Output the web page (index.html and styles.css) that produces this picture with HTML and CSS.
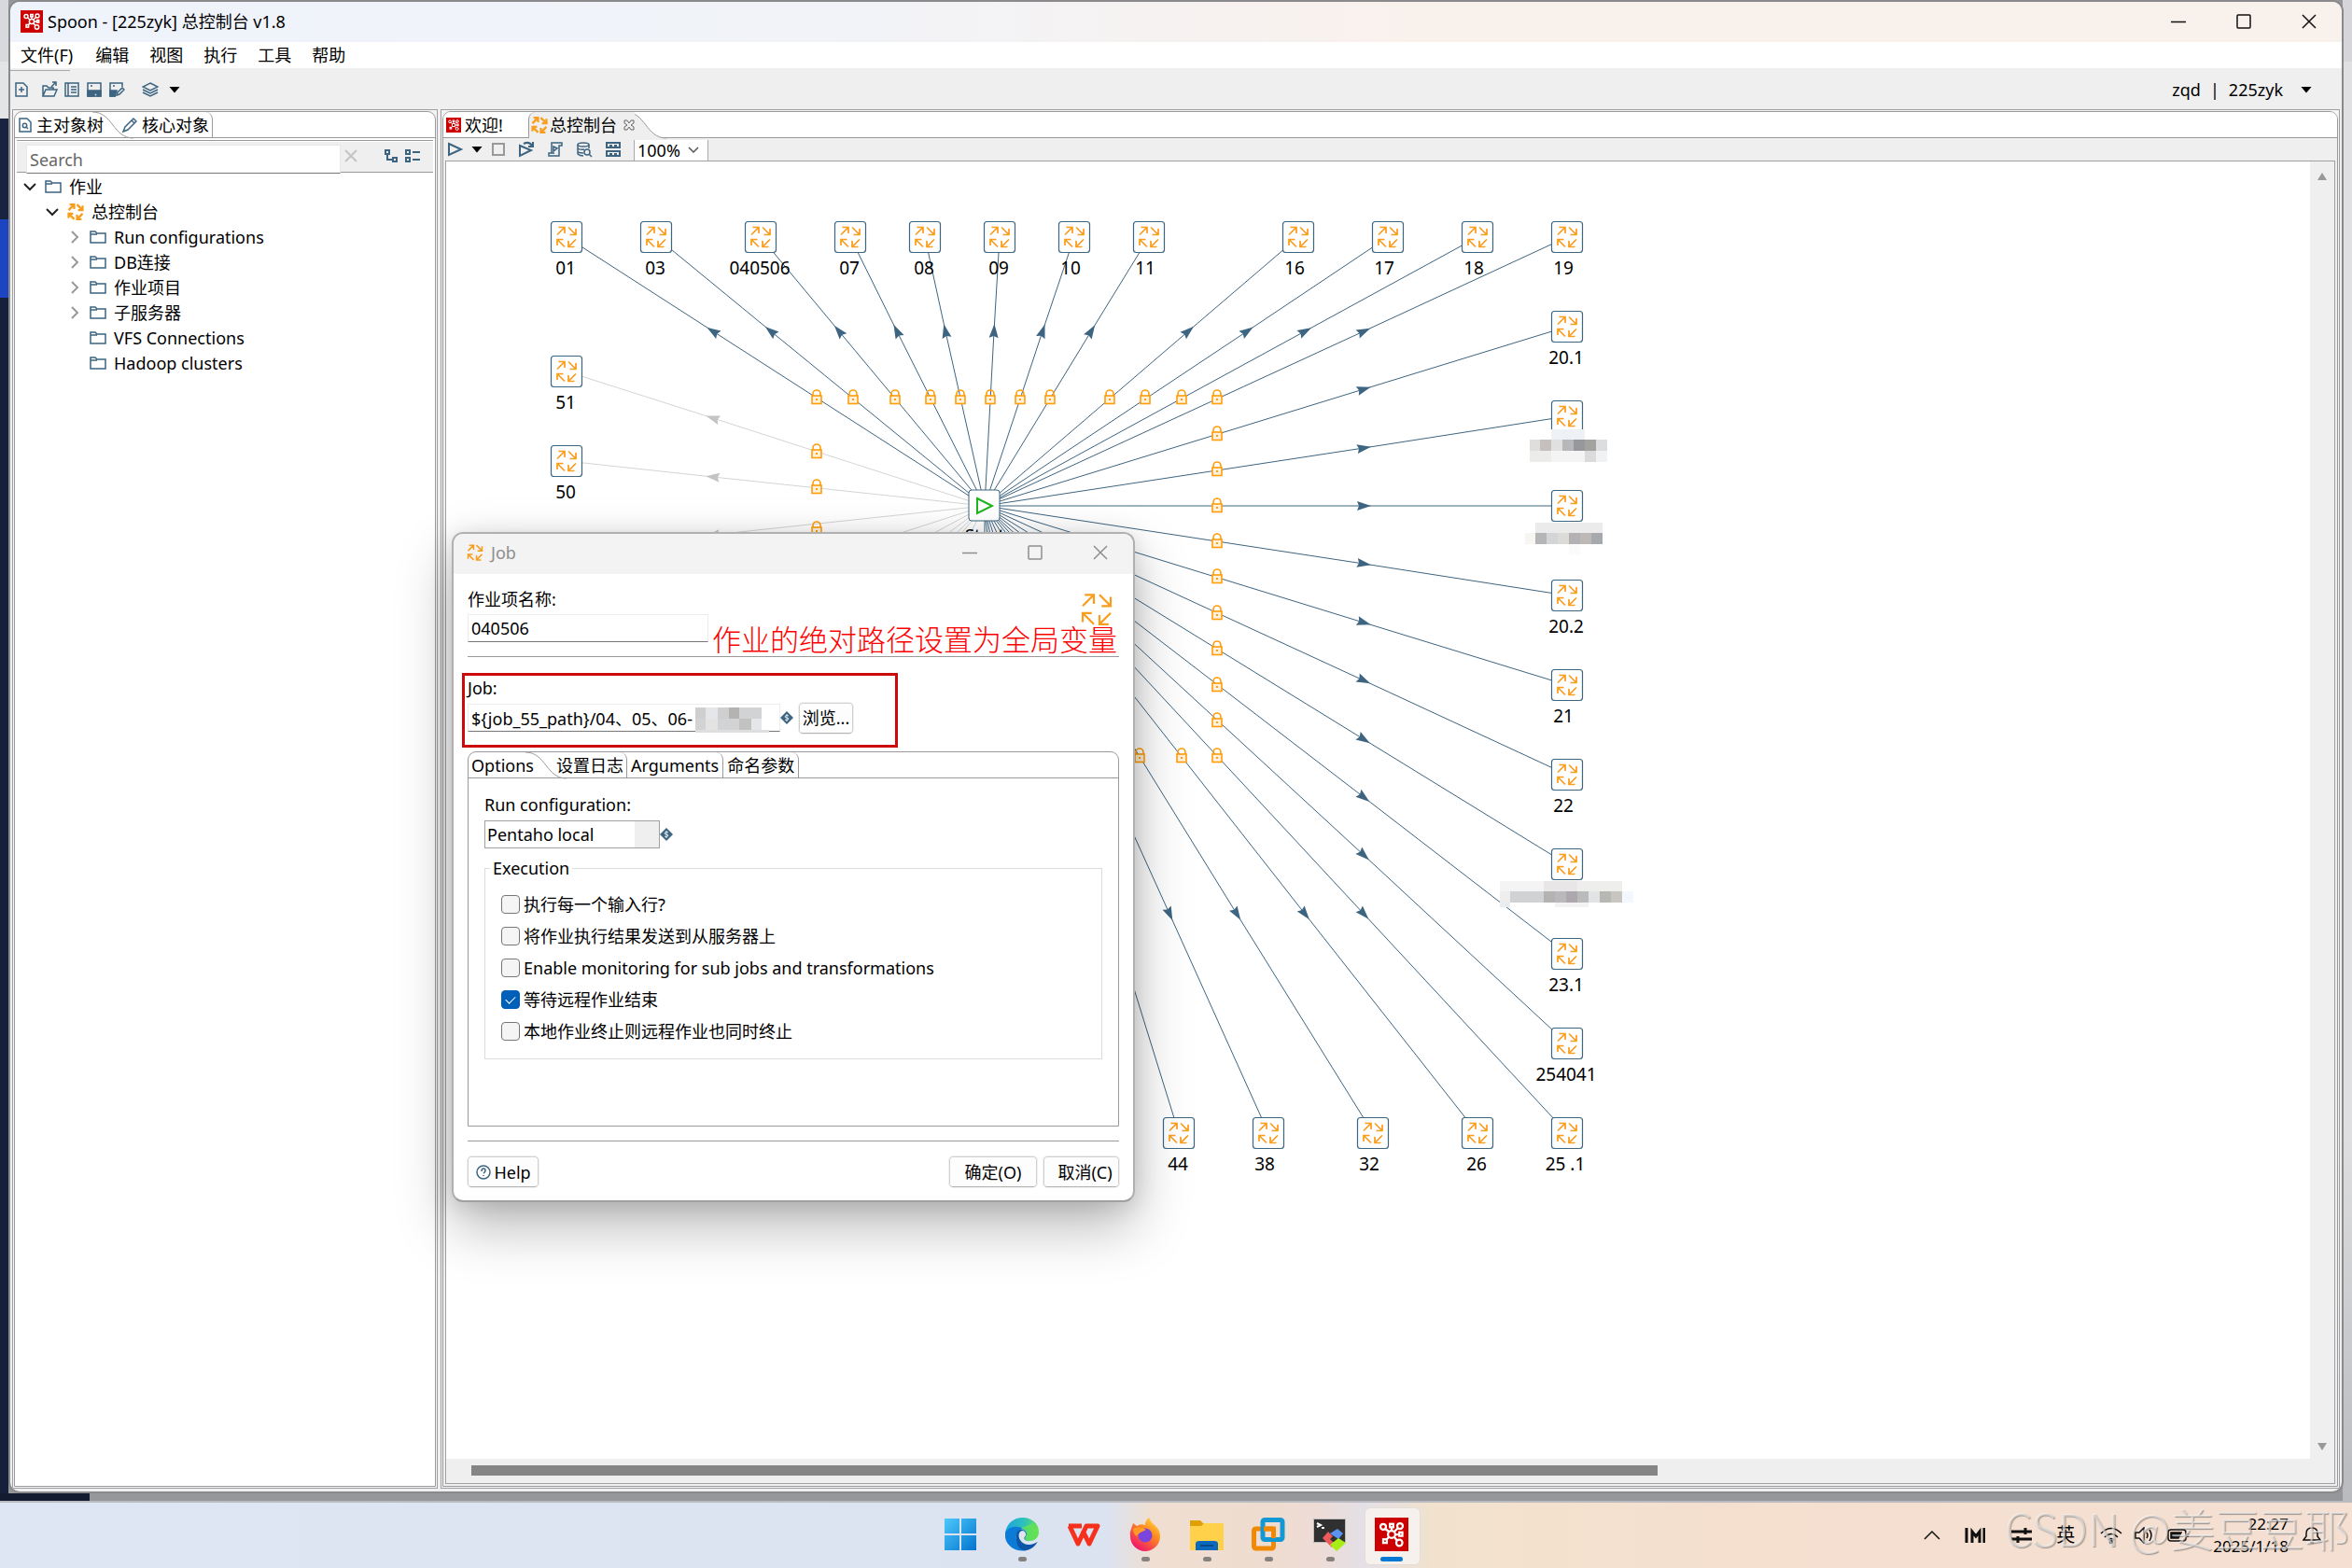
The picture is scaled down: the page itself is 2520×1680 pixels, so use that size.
FILE: index.html
```html
<!DOCTYPE html>
<html lang="zh-CN">
<head>
<meta charset="utf-8">
<title>Spoon - [225zyk] 总控制台 v1.8</title>
<link rel="stylesheet" href="styles.css">
</head>
<body>
<svg class="defs" width="0" height="0" aria-hidden="true">
  <defs>
    <symbol id="job" viewBox="-12 -12 24 24">
      <path d="M-10-2.500L-2-10.500M-8.500-10.500H-2V-4M2-10.500L10-2.500M10-9V-2.500H3.500M-2 10.500L-10 2.500M-10 9V2.500H-3.500M10 2.500L2 10.500M2 4V10.500H8.500"/>
    </symbol>
    <symbol id="folder" viewBox="0 0 18 14"><path d="M1 13V1H6L8 3H17V13ZM1 4H8" fill="none" stroke="#3d6480" stroke-width="1.500"/></symbol>
    <symbol id="logo" viewBox="0 0 24 24">
      <rect width="24" height="24" fill="#c00"/>
      <g fill="none" stroke="#fff" stroke-width="1.500"><circle cx="12" cy="12" r="2.600"/><circle cx="6" cy="6.500" r="2"/><circle cx="18" cy="6" r="2"/><circle cx="17.500" cy="18" r="2.200"/><rect x="6" y="15.500" width="2.600" height="2.600"/><rect x="10.800" y="4.500" width="2.400" height="2.400"/><rect x="17.500" y="10.500" width="2.200" height="2.600"/><path d="M7.500 8L10 10M16.500 7.500L14 10M14 14L16 16.500M10 14L8.500 15.500M12 7V9.500M14.500 12H17.500"/></g>
    </symbol>
    <symbol id="dollar" viewBox="0 0 14 14"><path d="M7 0L14 7L7 14L0 7Z" fill="#3d6480"/><path d="M9 5Q7 3.500 5.500 5T7 7T8.500 9T5 9M7 3V11" fill="none" stroke="#fff" stroke-width=".8"/></symbol>
    <symbol id="lock" viewBox="-7 -9 14 18"><rect x="-5" y="-2" width="10" height="8.500" fill="#fff1dc" stroke="#ff9d0a" stroke-width="1.600"/><path d="M-4-2V-4A4 4 0 0 1 4-4V-2" fill="none" stroke="#ff9d0a" stroke-width="1.600"/><rect x="-1" y="1" width="2" height="2" fill="#ff9d0a"/></symbol>
    <symbol id="node" viewBox="-18 -18 36 36"><rect x="-16.500" y="-16.500" width="33" height="33" rx="3" fill="#fff" stroke="#3d6480" stroke-width="1.200"/><use href="#job" x="-12" y="-12" width="24" height="24"/></symbol>
    <marker id="arrow" viewBox="-8 -8 16 16" markerWidth="16" markerHeight="16" markerUnits="userSpaceOnUse" orient="auto"><path d="M8 0L-7-5L-5 0L-7 5Z" fill="#3d6480"/></marker>
    <marker id="arrow-off" viewBox="-8 -8 16 16" markerWidth="16" markerHeight="16" markerUnits="userSpaceOnUse" orient="auto"><path d="M8 0L-7-5L-5 0L-7 5Z" fill="#c4c4c4"/></marker>
  </defs>
</svg>

<div class="desktop">
<main class="window">
  <header class="titlebar">
    <svg class="i24" ><use href="#logo"/></svg>
    <h1>Spoon - [225zyk] 总控制台 v1.8</h1>
    <div class="controls">
      <button aria-label="最小化"><svg width="16" height="16"><path d="M0 8.500H16"/></svg></button>
      <button aria-label="最大化"><svg width="16" height="16"><rect x="1" y="1" width="14" height="14" rx="1"/></svg></button>
      <button aria-label="关闭"><svg width="16" height="16"><path d="M1 1L15 15M15 1L1 15"/></svg></button>
    </div>
  </header>
  <nav class="menubar">
    <button>文件(F)</button><button>编辑</button><button>视图</button><button>执行</button><button>工具</button><button>帮助</button>
  </nav>
  <div class="toolbar">
    <button class="first" aria-label="新建"><svg width="16" height="18"><path d="M2 2H10L14 6V16H2ZM8 6V12M5 9H11"/></svg></button>
    <button aria-label="打开"><svg width="18" height="18"><path d="M2 16V5H6L8 7H13V9M2 16L5 9H17L14 16ZM11 6L16 1M12 1H16V5"/></svg></button>
    <button aria-label="浏览"><svg width="18" height="18"><path d="M2 2H16V16H2ZM5 2V16M8 6H14M8 9H14M8 12H14"/></svg></button>
    <button aria-label="保存"><svg width="18" height="18"><path d="M2 2H16V16H2ZM5 5H7"/><path d="M2 10H16V16H12V13H9V16H2Z" fill="#3d6480"/></svg></button>
    <button aria-label="另存为"><svg width="18" height="18"><path d="M8 16H2V2H15V6M5 5H7M9 15L10 12L15 7L17 9L12 14Z"/><path d="M2 10H9L7 16H2Z" fill="#3d6480"/></svg></button>
    <button class="layers" aria-label="透视图"><svg width="18" height="18"><path d="M9 2L17 6L9 10L1 6ZM1 9L9 13L17 9M1 12L9 16L17 12"/></svg></button>
    <i class="caret"></i>
    <div class="user"><span>zqd</span><span>|</span><span>225zyk</span><i class="caret"></i></div>
  </div>

  <div class="panes">
    <section class="pane side">
      <div class="pane-in">
        <div class="tabs">
          <button class="tab on"><svg class="line" width="14" height="18"><path d="M1 2H9L13 6V16H1Z"/><circle cx="6.500" cy="9.500" r="2.200"/><path d="M8 11L10 13"/></svg>主对象树</button>
          <svg class="curve" width="44" height="28"><path d="M0 0C22 0 22 28 44 28"/></svg>
          <button class="tab second"><svg class="line" width="16" height="18"><path d="M1 16L3 11L12 2L15 5L6 14ZM10 4L13 7"/></svg>核心对象</button>
        </div>
        <div class="search">
          <input type="text" placeholder="Search" aria-label="Search">
          <svg class="clear" width="16" height="16"><path d="M2 2L14 14M14 2L2 14"/></svg>
          <svg class="line" width="16" height="16"><path d="M2 2H6V6H2ZM4 6V12H10M10 10H14V14H10Z" stroke-width="2"/></svg>
          <svg class="line" width="18" height="16"><path d="M2 2H6V6H2ZM2 10H6V14H2ZM9 4H17M9 12H17" stroke-width="2"/></svg>
        </div>
        <ul class="tree">
          <li><svg class="open"><path d="M2 4L8 10L14 4"/></svg><svg class="fold"><use href="#folder"/></svg>作业</li>
          <li class="l2"><svg class="open"><path d="M2 4L8 10L14 4"/></svg><svg class="jobi bold"><use href="#job"/></svg>总控制台</li>
          <li class="l3"><svg class="shut"><path d="M5 1L11 7L5 13"/></svg><svg class="fold"><use href="#folder"/></svg>Run configurations</li>
          <li class="l3"><svg class="shut"><path d="M5 1L11 7L5 13"/></svg><svg class="fold"><use href="#folder"/></svg>DB连接</li>
          <li class="l3"><svg class="shut"><path d="M5 1L11 7L5 13"/></svg><svg class="fold"><use href="#folder"/></svg>作业项目</li>
          <li class="l3"><svg class="shut"><path d="M5 1L11 7L5 13"/></svg><svg class="fold"><use href="#folder"/></svg>子服务器</li>
          <li class="l3"><svg class="shut"></svg><svg class="fold"><use href="#folder"/></svg>VFS Connections</li>
          <li class="l3"><svg class="shut"></svg><svg class="fold"><use href="#folder"/></svg>Hadoop clusters</li>
        </ul>
      </div>
    </section>

    <section class="pane work">
      <div class="pane-in">
        <div class="tabs">
          <button class="tab welcome"><svg class="i16"><use href="#logo"/></svg>欢迎!</button>
          <button class="tab current"><svg class="jobi bold"><use href="#job"/></svg>总控制台<svg class="x" width="12" height="12"><path d="M1 1H4L6 4L8 1H11V4L8 6L11 8V11H8L6 8L4 11H1V8L4 6L1 4Z"/></svg></button>
          <svg class="curve grey" width="44" height="28"><path d="M0 0C22 0 22 28 44 28H0Z" class="fill"/><path d="M0 0C22 0 22 28 44 28"/></svg>
        </div>
        <div class="runbar">
          <button aria-label="运行"><svg width="18" height="18"><path d="M2 3L15 9L2 15Z" stroke-width="2"/></svg></button>
          <i class="caret"></i>
          <button aria-label="停止" class="stop"><svg width="18" height="18"><rect x="3" y="3" width="12" height="12" stroke="#999" stroke-width="2"/></svg></button>
          <button aria-label="重放"><svg width="18" height="18"><path d="M2 5L14 10L2 16ZM6 3Q12 0 15 5M16 1V6H11" stroke-width="2"/></svg></button>
          <button aria-label="SQL"><svg width="18" height="18"><path d="M5 13V2H16V5H13V16H2V13H8M7 6L11 8L7 11Z"/></svg></button>
          <button aria-label="探索数据库"><svg width="18" height="18"><ellipse cx="8" cy="4" rx="6" ry="2"/><path d="M2 4V14Q4 16 8 16M14 4V8M2 8Q5 10 9 9M2 12Q5 13 8 13M14 14L17 17"/><circle cx="12" cy="12" r="3"/></svg></button>
          <button aria-label="结果"><svg width="18" height="18"><path d="M2 2H16V7H2ZM2 11H16V16H2ZM5 5H8M10 5H13M5 14H8M10 14H13" stroke-width="2"/></svg></button>
          <div class="zoom"><input value="100%" aria-label="缩放"><svg width="12" height="8"><path d="M1 1L6 6L11 1" stroke="#555"/></svg></div>
        </div>
        <div class="canvas">
          <svg class="graph">
            <g transform="translate(-478 -173)">
              <g class="hop off">
                <polyline points="1055,542 764,448 607,398"/><polyline points="1055,542 764,511 607,494"/><polyline points="1055,542 764,573 607,590"/>
                <polyline points="1055,542 764,636 607,686"/><polyline points="1055,542 764,698 607,782"/><polyline points="1055,542 764,760 607,878"/><polyline points="1055,542 764,823 607,974"/><polyline points="1055,542 764,885 607,1070"/><polyline points="1055,542 826,979 703,1214"/>
              </g>
              <g class="hop">
                <polyline points="1055,542 764,355 607,254"/><polyline points="1055,542 826,355 703,254"/><polyline points="1055,542 899,355 815,254"/><polyline points="1055,542 961,355 911,254"/>
                <polyline points="1055,542 1013,355 991,254"/><polyline points="1055,542 1065,355 1071,254"/><polyline points="1055,542 1117,355 1151,254"/><polyline points="1055,542 1169,355 1231,254"/>
                <polyline points="1055,542 1273,355 1391,254"/><polyline points="1055,542 1336,355 1487,254"/><polyline points="1055,542 1398,355 1583,254"/><polyline points="1055,542 1461,355 1679,254"/>
                <polyline points="1055,542 1461,417 1679,350"/><polyline points="1055,542 1461,480 1679,446"/><polyline points="1055,542 1461,542 1679,542"/><polyline points="1055,542 1461,604 1679,638"/>
                <polyline points="1055,542 1461,667 1679,734"/><polyline points="1055,542 1461,729 1679,830"/><polyline points="1055,542 1461,792 1679,926"/><polyline points="1055,542 1461,854 1679,1022"/>
                <polyline points="1055,542 1461,916 1679,1118"/><polyline points="1055,542 1461,979 1679,1214"/><polyline points="1055,542 1398,979 1583,1214"/><polyline points="1055,542 1325,979 1471,1214"/>
                <polyline points="1055,542 1253,979 1359,1214"/><polyline points="1055,542 1190,979 1263,1214"/><polyline points="1055,542 1138,979 1183,1214"/><polyline points="1055,542 1096,979 1119,1214"/><polyline points="1055,542 1055,979 1055,1214"/>
              </g>
              <g transform="translate(-7 -10)">
                <use href="#lock" x="875" y="427" width="14" height="18"/><use href="#lock" x="914" y="427" width="14" height="18"/><use href="#lock" x="959" y="427" width="14" height="18"/><use href="#lock" x="997" y="427" width="14" height="18"/><use href="#lock" x="1029" y="427" width="14" height="18"/><use href="#lock" x="1061" y="427" width="14" height="18"/><use href="#lock" x="1093" y="427" width="14" height="18"/><use href="#lock" x="1125" y="427" width="14" height="18"/><use href="#lock" x="1189" y="427" width="14" height="18"/><use href="#lock" x="1227" y="427" width="14" height="18"/><use href="#lock" x="1266" y="427" width="14" height="18"/><use href="#lock" x="1304" y="427" width="14" height="18"/>
                <use href="#lock" x="1304" y="466" width="14" height="18"/><use href="#lock" x="1304" y="504" width="14" height="18"/><use href="#lock" x="1304" y="543" width="14" height="18"/><use href="#lock" x="1304" y="581" width="14" height="18"/><use href="#lock" x="1304" y="619" width="14" height="18"/><use href="#lock" x="1304" y="658" width="14" height="18"/><use href="#lock" x="1304" y="696" width="14" height="18"/><use href="#lock" x="1304" y="735" width="14" height="18"/><use href="#lock" x="1304" y="773" width="14" height="18"/><use href="#lock" x="1304" y="811" width="14" height="18"/><use href="#lock" x="1266" y="811" width="14" height="18"/><use href="#lock" x="1221" y="811" width="14" height="18"/>
                <use href="#lock" x="875" y="485" width="14" height="18"/><use href="#lock" x="875" y="523" width="14" height="18"/><use href="#lock" x="875" y="568" width="14" height="18"/>
              </g>
              <g class="nodes" transform="translate(-18 -18)">
                <use href="#node" x="607" y="254" width="36" height="36"/><use href="#node" x="703" y="254" width="36" height="36"/><use href="#node" x="815" y="254" width="36" height="36"/><use href="#node" x="911" y="254" width="36" height="36"/><use href="#node" x="991" y="254" width="36" height="36"/><use href="#node" x="1071" y="254" width="36" height="36"/><use href="#node" x="1151" y="254" width="36" height="36"/><use href="#node" x="1231" y="254" width="36" height="36"/><use href="#node" x="1391" y="254" width="36" height="36"/><use href="#node" x="1487" y="254" width="36" height="36"/><use href="#node" x="1583" y="254" width="36" height="36"/><use href="#node" x="1679" y="254" width="36" height="36"/>
                <use href="#node" x="1679" y="350" width="36" height="36"/><use href="#node" x="1679" y="446" width="36" height="36"/><use href="#node" x="1679" y="542" width="36" height="36"/><use href="#node" x="1679" y="638" width="36" height="36"/><use href="#node" x="1679" y="734" width="36" height="36"/><use href="#node" x="1679" y="830" width="36" height="36"/><use href="#node" x="1679" y="926" width="36" height="36"/><use href="#node" x="1679" y="1022" width="36" height="36"/><use href="#node" x="1679" y="1118" width="36" height="36"/><use href="#node" x="1679" y="1214" width="36" height="36"/>
                <use href="#node" x="1583" y="1214" width="36" height="36"/><use href="#node" x="1471" y="1214" width="36" height="36"/><use href="#node" x="1359" y="1214" width="36" height="36"/><use href="#node" x="1263" y="1214" width="36" height="36"/><use href="#node" x="607" y="398" width="36" height="36"/><use href="#node" x="607" y="494" width="36" height="36"/>
              </g>
              <rect x="1038" y="525" width="33" height="33" rx="3" fill="#fff" stroke="#3d6480"/>
              <path d="M1047 534L1063 542L1047 550Z" fill="none" stroke="#1db41d" stroke-width="2"/>
              <g class="labels">
                <text x="606" y="294">01</text><text x="702" y="294">03</text><text x="814" y="294">040506</text><text x="910" y="294">07</text><text x="990" y="294">08</text><text x="1070" y="294">09</text><text x="1147" y="294">10</text><text x="1227" y="294">11</text><text x="1387" y="294">16</text><text x="1483" y="294">17</text><text x="1579" y="294">18</text><text x="1675" y="294">19</text>
                <text x="1678" y="390">20.1</text><text x="1678" y="678">20.2</text><text x="1675" y="774">21</text><text x="1675" y="870">22</text><text x="1678" y="1062">23.1</text><text x="1678" y="1158">254041</text><text x="1677" y="1254">25 .1</text>
                <text x="1582" y="1254">26</text><text x="1467" y="1254">32</text><text x="1355" y="1254">38</text><text x="1262" y="1254">44</text><text x="606" y="438">51</text><text x="606" y="534">50</text><text x="1055" y="581">Start</text>
              </g>
              <g class="masked">
                <path fill="#eef1f5" d="M1662 460h36v11h-36z"/><path fill="#dfdedc" d="M1639 471h11v12h-11z"/><path fill="#c5c0be" d="M1650 471h12v12h-12z"/><path fill="#e0e0e1" d="M1662 471h12v12h-12z"/><path fill="#b6b8ba" d="M1674 471h12v12h-12z"/><path fill="#96989c" d="M1686 471h12v12h-12z"/><path fill="#a2a39f" d="M1698 471h12v12h-12z"/><path fill="#dcdddf" d="M1710 471h12v12h-12z"/><path fill="#ececeb" d="M1639 483h23v12h-23z"/><path fill="#f3f4f3" d="M1662 483h36v12h-36z"/><path fill="#dbdbdb" d="M1698 483h12v12h-12z"/><path fill="#f1f2f4" d="M1710 483h12v12h-12z"/>
                <path fill="#ebebec" d="M1645 560h72v11h-72z"/><path fill="#f7f6f2" d="M1634 571h11v12h-11z"/><path fill="#b4b6b8" d="M1645 571h12v12h-12z"/><path fill="#d4d5d7" d="M1657 571h12v12h-12z"/><path fill="#dcdbd7" d="M1669 571h12v12h-12z"/><path fill="#b4b1b5" d="M1681 571h12v12h-12z"/><path fill="#beb9b6" d="M1693 571h12v12h-12z"/><path fill="#a6a9ae" d="M1705 571h12v12h-12z"/><path fill="#fbfbfb" d="M1681 583h12v12h-12z"/>
                <path fill="#f4f4f4" d="M1607 944h47v11h-47z"/><path fill="#e8e6e7" d="M1654 944h36v11h-36z"/><path fill="#eeefed" d="M1690 944h48v11h-48z"/><path fill="#f0eeec" d="M1607 955h11v12h-11z"/><path fill="#d1d2d4" d="M1618 955h36v12h-36z"/><path fill="#b4b3b1" d="M1654 955h12v12h-12z"/><path fill="#b9b9bb" d="M1666 955h12v12h-12z"/><path fill="#aea7ae" d="M1678 955h12v12h-12z"/><path fill="#b9bcba" d="M1690 955h12v12h-12z"/><path fill="#e2e3e5" d="M1702 955h12v12h-12z"/><path fill="#b7b8b4" d="M1714 955h12v12h-12z"/><path fill="#c9c6c2" d="M1726 955h12v12h-12z"/><path fill="#f3f8ff" d="M1738 955h12v12h-12z"/><path fill="#e9edf0" d="M1607 967h11v5h-11z"/><path fill="#f3f3f3" d="M1666 967h36v5h-36z"/>
              </g>
            </g>
          </svg>
          <div class="vbar"><svg width="12" height="10"><path d="M6 1L11 9H1Z"/></svg><svg width="12" height="10"><path d="M6 9L11 1H1Z"/></svg></div>
          <div class="hbar"><div class="thumb"></div></div>
        </div>
      </div>
    </section>
  </div>
</main>
</div>

<section class="dialog" role="dialog" aria-label="Job">
  <header>
    <svg class="jobi"><use href="#job"/></svg><h2>Job</h2>
    <div class="controls">
      <button aria-label="最小化"><svg width="16" height="16"><path d="M0 8.500H16"/></svg></button>
      <button aria-label="最大化"><svg width="16" height="16"><rect x="1" y="1" width="14" height="14" rx="1"/></svg></button>
      <button aria-label="关闭"><svg width="16" height="16"><path d="M1 1L15 15M15 1L1 15"/></svg></button>
    </div>
  </header>
  <form class="body">
    <div class="name-row">
      <div class="name-field"><label for="jn">作业项名称:</label><input id="jn" type="text" value="040506"></div>
      <svg class="bigjob"><use href="#job"/></svg>
      <p class="note">作业的绝对路径设置为全局变量</p>
    </div>
    <div class="path-box">
      <label for="jp">Job:</label>
      <div class="path-row">
        <div class="path-field"><input id="jp" type="text" value="${job_55_path}/04、05、06-">
          <svg class="mosaic" width="80" height="27"><path fill="#cfcfcf" d="M0 0h11v12H0zM24 0h12v12H24z"/><path fill="#e4e6e9" d="M11 0h13v12H11zM60 12h11v12H60z"/><path fill="#b5b3b2" d="M36 0h11v12H36z"/><path fill="#d2d3d5" d="M47 0h24v12H47zM0 12h11v12H0zM24 12h23v12H24z"/><path fill="#e3e3e1" d="M11 12h13v12H11z"/><path fill="#c2c2c3" d="M47 12h13v12H47z"/><path fill="#dedede" d="M0 24h79v3H0z"/></svg>
        </div>
        <svg class="dollar"><use href="#dollar"/></svg>
        <button type="button" class="btn">浏览...</button>
      </div>
    </div>
    <div class="folder">
      <div class="tabs">
        <button type="button" class="tab opt">Options</button>
        <svg class="curve" width="44" height="28"><path d="M0 0C22 0 22 28 44 28"/></svg>
        <button type="button" class="tab lap">设置日志</button><button type="button" class="tab">Arguments</button><button type="button" class="tab">命名参数</button>
      </div>
      <div class="options">
        <label for="rc">Run configuration:</label>
        <div class="select-row"><select id="rc"><option>Pentaho local</option></select><svg class="dollar"><use href="#dollar"/></svg></div>
        <fieldset>
          <legend>Execution</legend>
          <label><input type="checkbox">执行每一个输入行?</label>
          <label><input type="checkbox">将作业执行结果发送到从服务器上</label>
          <label><input type="checkbox">Enable monitoring for sub jobs and transformations</label>
          <label><input type="checkbox" checked>等待远程作业结束</label>
          <label><input type="checkbox">本地作业终止则远程作业也同时终止</label>
        </fieldset>
      </div>
    </div>
    <footer>
      <button type="button" class="btn"><svg class="line" width="18" height="18"><circle cx="9" cy="9" r="7"/><path d="M7 8Q7 5 9 5T11 7T9 10M9 12V13"/></svg>Help</button>
      <button type="button" class="btn ok">确定(O)</button>
      <button type="button" class="btn cancel">取消(C)</button>
    </footer>
  </form>
</section>

<footer class="taskbar">
  <div class="side-space"></div>
  <div class="apps">
    <button aria-label="开始"><svg viewBox="0 0 36 36"><defs><linearGradient id="w" x2="1" y2="1"><stop stop-color="#4cc9fb"/><stop offset="1" stop-color="#0473ce"/></linearGradient></defs><path fill="url(#w)" d="M1 1h16v16H1zM19 1h16v16H19zM1 19h16v16H1zM19 19h16v16H19z"/></svg></button>
    <button class="run" aria-label="Edge"><svg viewBox="0 0 36 36"><defs><linearGradient id="e1" x2="1"><stop stop-color="#1ba4dd"/><stop offset=".6" stop-color="#2fc3b8"/><stop offset="1" stop-color="#67e34d"/></linearGradient></defs><path fill="url(#e1)" d="M0 16C2 6 9 0 19 0C29 0 36 7 36 15C36 22 31 25 26 25C22 25 20 23 22 20C24 16 20 12 15 11C8 10 3 13 0 16Z"/><path fill="#0c7bd8" d="M0 16C4 9 13 8 19 12C14 13 11 18 12 24C13 29 17 33 23 35C10 38 -2 28 0 16Z"/><path fill="#0d56a5" d="M12 19C12 14 16 12 19 13C23 15 24 18 22 20C20 24 23 26 28 26C31 26 34 25 35 25C32 32 25 36 19 35C13 32 11 26 12 19Z"/><path fill="#dde5f2" d="M36 15C36 23 31 25.500 26 25.500C21 25.500 19 22 21.500 20C23 18 22 15 19 14C15 14 13 19 16 24C20 30 28 31 36 25Z"/><path fill="#67e34d" d="M22 20C24 16 22 12 17 11L30 6L36 15C36 22 31 25 26 25C22 25 20 23 22 20Z" opacity=".75"/></svg></button>
    <button aria-label="WPS"><svg viewBox="0 0 36 36"><path fill="none" stroke="#f5301c" stroke-width="5" stroke-linejoin="round" d="M2 9H16M3 9L12 28L21 9H33L24 28L17 14"/></svg></button>
    <button class="run" aria-label="Firefox"><svg viewBox="0 0 36 36"><defs><linearGradient id="f" x1="1" x2=".3" y2="1"><stop stop-color="#fff047"/><stop offset=".45" stop-color="#ff8b1f"/><stop offset="1" stop-color="#f0126f"/></linearGradient></defs><path fill="url(#f)" d="M3 12L5 6L9 9Q13 6 18 8Q18 3 22 0Q24 5 28 8Q34 13 34 20A16 16 0 0 1 2 20Q1 16 3 12Z"/><circle cx="18" cy="19" r="7.500" fill="#7b44dc"/><path fill="#ff9b24" d="M5 12Q12 8 19 13L15 15Q10 17 9 20Q5 17 5 12Z"/></svg></button>
    <button class="run" aria-label="文件资源管理器"><svg viewBox="0 0 36 36"><path fill="#dfa004" d="M0 3h11l4 4v5H0z"/><path fill="#ffd04a" d="M0 9h12l3-3h21v29H0z"/><path fill="#0a69bd" d="M6 35V28Q6 25 10 25H26Q30 25 30 28V35Z"/><path stroke="#074a8c" stroke-width="2" d="M11 30H25"/></svg></button>
    <button class="run" aria-label="VMware"><svg viewBox="0 0 36 36"><g fill="none" stroke-width="5"><rect x="2.500" y="12" width="21" height="21" rx="2" stroke="#f08a06"/><rect x="12" y="2.500" width="21" height="21" rx="2" stroke="#1498d4"/><path d="M13 12H23.500V22" stroke="#f08a06"/></g></svg></button>
    <button class="run" aria-label="终端"><svg viewBox="0 0 36 36"><rect x=".5" y="1.500" width="34" height="25" fill="#303030" stroke="#bbb"/><path d="M4 6L8 8L4 10M9 11H12" fill="none" stroke="#fff" stroke-width="2"/><path fill="#ee5a5a" d="M10 22L16 15L21 20L18 23L23 28L20 32Z"/><path fill="#5b93f0" d="M18 17L26 12L32 17L27 23Z"/><path fill="#a6ee16" d="M18 29L27 22L35 27L25 36Z"/></svg></button>
    <button class="run active" aria-label="Spoon"><svg viewBox="0 0 24 24"><use href="#logo"/></svg></button>
  </div>
  <div class="tray">
    <svg width="18" height="12"><path d="M1 10L9 2L17 10"/></svg>
    <svg class="mi" width="22" height="18"><path d="M2 1V17M8 17V5L12 10L16 5V17M21 1V17" stroke-width="3"/></svg>
    <svg class="mi2" width="22" height="18"><path d="M0 5H22M0 13H22M15 1V8M7 10V17" stroke-width="3"/></svg>
    <span class="ime">英</span>
    <svg class="wifi" width="24" height="18"><path d="M1 7Q12-4 23 7M5 11Q12 4 19 11M9 14Q12 11 15 14"/><circle cx="12" cy="16" r="1.500" fill="#111"/></svg>
    <svg class="snd" width="20" height="18"><path d="M1 6H5L10 1V17L5 12H1ZM13 6Q15 9 13 12M16 3Q20 9 16 15"/></svg>
    <svg class="bat" width="24" height="16"><rect x="1" y="2" width="19" height="12" rx="3"/><path d="M4 5H15L12 11H4Z" fill="#111"/><path d="M22 6V10"/></svg>
    <time>22:27<br>2025/1/18</time>
    <svg width="20" height="20"><path d="M1 15H19L16 11V8Q16 2 10 2T4 8V11ZM8 18H12"/></svg>
  </div>
  <div class="watermark">CSDN @姜豆豆耶</div>
</footer>
</body>
</html>
```
FILE: styles.css
```css
* { box-sizing: border-box; }
body {
  margin: 0;
  min-height: 100vh;
  display: flex;
  flex-direction: column;
  position: relative;
  font: 18px/24px "Noto Sans", "Noto Sans CJK SC", sans-serif;
  color: #000;
}
button, input, select { font: inherit; color: inherit; border: 0; background: none; padding: 0; margin: 0; border-radius: 0; }
h1, h2, p, ul { margin: 0; padding: 0; font: inherit; list-style: none; }
svg { flex: none; display: block; }
.defs { position: absolute; }

.desktop {
  flex: 1;
  display: flex;
  padding: 0 9px 8px;
  background:
    linear-gradient(#131b31, #131b31) 0 100% / 96px 8px no-repeat,
    linear-gradient(#d8d9dd 66px, #e3e4e6 66px 127px, #17233f 127px 235px, #1c45c4 235px 319px, #17203a 319px) 0 0 / 9px 100% no-repeat,
    linear-gradient(#d6d6da 66px, #e0e0e2 66px 1200px, #b8babd) 100% 0 / 10px 100% no-repeat,
    #96979b;
}
.window {
  flex: 1;
  min-width: 0;
  display: flex;
  flex-direction: column;
  border: 2px solid #8a8a8c;
  border-radius: 12px;
  background: #efefef;
  overflow: hidden;
}
.titlebar { height: 43px; display: flex; align-items: center; gap: 5px; padding: 0 0 2px 11px; background: linear-gradient(90deg, #eff3fb, #f1f3f8 35%, #f9f1ec 60%, #f9f1ec); }
.i24 { width: 24px; height: 24px; }
.i16 { width: 16px; height: 16px; }
.controls { margin-left: auto; display: flex; }
.controls button { width: 70px; height: 40px; display: grid; place-items: center; }
.controls svg { fill: none; stroke: #111; stroke-width: 1.500; }
.menubar { height: 28px; background: #fff; display: flex; align-items: center; gap: 22px; padding-left: 11px; }
.menubar button:first-child { margin-right: 2px; }
.toolbar { height: 44px; display: flex; align-items: center; padding: 2px 32px 0 0; background: linear-gradient(#a8a8a8, #a8a8a8) 0 2px / 64px 1px no-repeat; }
.toolbar button { width: 24px; height: 24px; display: grid; place-items: center; }
.toolbar .first { margin-right: 6px; }
.toolbar .layers { margin: 0 8px 0 12px; }
.toolbar svg, .runbar svg, .line { fill: none; stroke: #3d6480; stroke-width: 1.500; }
.caret { width: 12px; height: 7px; background: #000; clip-path: polygon(0 0, 100% 0, 50% 100%); }
.user { margin-left: auto; display: flex; align-items: center; gap: 10px; }
.user .caret { margin-left: 9px; }

.panes { flex: 1; display: flex; gap: 3px; padding: 0 2px 3px; }
.pane { border: 1px solid #a0a0a4; padding: 1px; background: #f4f4f4; display: flex; }
.side { width: 456px; }
.work { flex: 1; min-width: 0; }
.pane-in { flex: 1; min-width: 0; display: flex; flex-direction: column; border: 1px solid #9a9a9a; border-radius: 9px 9px 0 0; background: #fff; }
.tabs { height: 28px; display: flex; border-bottom: 1px solid #9a9a9a; }
.tab { display: flex; align-items: center; height: 27px; white-space: nowrap; }
.curve { fill: none; stroke: #9a9a9a; overflow: visible; }
.side .on { padding-left: 4px; gap: 5px; margin-right: -12px; }
.side .second { gap: 5px; padding-right: 3px; margin-left: -12px; border-right: 1px solid #9a9a9a; border-radius: 0 8px 0 0; }
.search { height: 37px; margin: 2px 2px 0; padding: 4px 10px 0 10px; display: flex; border-top: 1px solid #9a9a9a; background: linear-gradient(#9a9a9a, #9a9a9a) 0 33px / 100% 1px no-repeat, linear-gradient(#efefef, #efefef) 0 1px / 100% 32px no-repeat; }
.search input { width: 337px; height: 31px; padding: 0 3px; background: #fff; border: 1px solid #e8e8e8; border-bottom-color: #777; outline: 0; }
.search input::placeholder { color: #666; opacity: 1; }
.search svg { margin-top: 4px; }
.clear { margin: 0 27px 0 3px; fill: none; stroke: #c4c4c4; stroke-width: 2; }
.search .line + .line { margin-left: 6px; }
.tree { margin-top: -1px; }
.tree li { height: 27px; display: flex; align-items: center; padding-left: 8px; }
.tree .l2 { padding-left: 32px; }
.tree .l3 { padding-left: 56px; }
.open, .shut { width: 16px; height: 14px; fill: none; stroke: #222; stroke-width: 2; margin-right: 8px; }
.shut { stroke: #999; }
.fold { width: 18px; height: 14px; margin-right: 8px; }
.jobi { width: 18px; height: 18px; fill: none; stroke: #f99d1c; stroke-width: 2; margin-right: 8px; }
.bold { stroke-width: 3; }

.work .pane-in { background: #efefef; }
.work .tabs { background: #fff; border-radius: 8px 8px 0 0; }
.welcome { padding-left: 3px; width: 91px; gap: 4px; }
.current { background: #efefef; height: 28px; border-left: 1px solid #9a9a9a; border-radius: 8px 0 0 0; padding-left: 2px; position: relative; margin-right: -10px; z-index: 1; }
.current .jobi { margin-right: 2px; }
.current .x { margin-left: 7px; fill: none; stroke: #666; }
.grey .fill { fill: #efefef; stroke: none; }
.grey { position: relative; }
.runbar { height: 24px; display: flex; align-items: center; padding-left: 4px; }
.runbar button { width: 18px; margin-right: 13px; }
.runbar button:first-child { margin-right: 8px; }
.runbar .caret { margin-right: 8px; }
.runbar .stop { margin-right: 12px; }
.zoom { display: flex; align-items: center; width: 80px; height: 22px; margin-top: 2px; background: #fff; border: 1px solid #aaa; border-width: 0 1px; padding-left: 3px; }
.zoom input { width: 54px; height: 22px; outline: 0; }
.canvas { flex: 1; margin: 0 2px 2px; border: 1px solid #a0a0a4; background: #fff; display: grid; grid-template: minmax(0, 1fr) 26px / minmax(0, 1fr) 26px; }
.graph { width: 100%; height: 100%; overflow: hidden; }
.hop { fill: none; stroke: #3d6480; marker-mid: url(#arrow); }
.off { stroke: #d4d4d4; marker-mid: url(#arrow-off); }
.nodes { fill: none; stroke: #f99d1c; stroke-width: 1.700; }
.labels { font-size: 19px; text-anchor: middle; }
.vbar { background: #efefef; grid-row: 1 / 3; grid-column: 2; display: flex; flex-direction: column; justify-content: space-between; align-items: center; padding: 11px 0 34px; fill: #999; }
.hbar { background: #efefef; padding: 7px 0 0 27px; }
.thumb { width: 64.5%; height: 11px; background: #858585; }

.dialog {
  position: absolute;
  left: 484px;
  top: 570px;
  width: 732px;
  border: 2px solid #b0b0b0;
  border-bottom-color: #a0a0a0;
  border-radius: 12px;
  background: #fff;
  box-shadow: 0 26px 60px rgba(0, 0, 0, .28), 0 4px 24px rgba(0, 0, 0, .12);
}
.dialog header { height: 43px; display: flex; align-items: center; background: #f3f3f3; border-radius: 10px 10px 0 0; color: #8e8e8e; padding: 0 0 3px 14px; }
.dialog .controls svg { stroke: #8e8e8e; }
.body { padding: 15px 15px 14px; display: flex; flex-direction: column; }
.name-row { display: flex; flex-wrap: wrap; height: 74px; border-bottom: 1px solid #9a9a9a; position: relative; }
.name-field { display: flex; flex-direction: column; gap: 4px; width: 258px; }
.body input[type=text] { height: 30px; border: 1px solid #ececec; border-bottom-color: #777; background: #fff; padding: 0 3px; outline: 0; }
.bigjob { width: 36px; height: 36px; margin: 5px 6px 0 auto; fill: none; stroke: #f99d1c; stroke-width: 1.500; }
.note { position: absolute; left: 262px; top: 36px; font-size: 31px; line-height: 38px; font-weight: 300; color: #f00; white-space: nowrap; }
.path-box { width: 467px; height: 80px; margin: 17px 0 4px -6px; padding: 1px 3px; border: 3px solid #cc0a0a; }
.path-box > label { display: block; height: 27px; }
.path-row { display: flex; align-items: center; height: 34px; }
.path-field { position: relative; width: 335px; }
.path-field input { width: 335px; }
.mosaic { position: absolute; left: 244px; top: 4px; }
.dollar { width: 14px; height: 14px; }
.btn { height: 33px; display: flex; align-items: center; justify-content: center; background: #fdfdfd; border: 1px solid #d0d0d0; border-bottom-color: #b4b4b4; border-radius: 4px; outline: 1px solid #f0f0f0; white-space: nowrap; }
.path-row .btn { margin-left: 6px; width: 58px; }
.folder { height: 402px; border: 1px solid #9a9a9a; border-radius: 9px 9px 0 0; }
.folder .tab { padding: 0 4px; border-right: 1px solid #9a9a9a; border-radius: 0 8px 0 0; }
.folder .opt { border: 0; padding: 0 0 0 3px; width: 80px; margin-right: -19px; }
.folder .lap { margin-left: -15px; padding-right: 3px; }
.options { padding: 16px 17px 0; }
.options > label { display: block; }
.select-row { display: flex; align-items: center; margin: 5px 0 9px; }
.select-row select { appearance: none; width: 188px; height: 30px; padding: 0 2px; border: 1px solid #a0a0a4; background: linear-gradient(#efefef, #efefef) 100% 0 / 26px 100% no-repeat #fff; }
fieldset { margin: 0; padding: 10px 17px 12px; border: 1px solid #dcdcdc; display: flex; flex-direction: column; }
legend { padding: 0 3px; margin-left: -12px; }
fieldset label { height: 34px; display: flex; align-items: center; gap: 4px; }
fieldset input { appearance: none; width: 20px; height: 20px; border: 1px solid #777; border-radius: 4px; background: #f5f5f5; }
fieldset input:checked { border-color: #005fb8; background: #005fb8; display: grid; place-items: center; }
fieldset input:checked::after { content: ""; width: 9px; height: 5px; border: solid #fff; border-width: 0 0 1px 1px; rotate: -45deg; margin-bottom: 3px; }
.dialog footer { margin-top: 15px; padding-top: 16px; border-top: 1px solid #9a9a9a; display: flex; gap: 7px; }
.dialog footer .btn { width: 76px; gap: 2px; }
.dialog footer .ok { width: 94px; margin-left: auto; }
.dialog footer .cancel { width: 81px; padding-left: 8px; }

.taskbar { position: relative; height: 72px; display: grid; grid-template-columns: 1fr auto 1fr; border-top: 2px solid #b9bbc0; background: linear-gradient(90deg, #dee6f4, #dbe3f1 47%, #efded1 49%, #efdcd0 54%, #eedbd6 56%, #e3e0e6 58%, #f2e2cd 61%, #f5dfcf 75%, #f4dfd2); }
.apps { display: flex; }
.apps button { width: 66px; height: 70px; display: flex; justify-content: center; padding-top: 16px; position: relative; }
.apps svg { width: 36px; height: 36px; position: relative; }
.run::after { content: ""; position: absolute; left: 29px; top: 58px; width: 9px; height: 5px; border-radius: 3px; background: #85817f; }
.active::before { content: ""; position: absolute; left: 4px; top: 5px; width: 58px; height: 60px; border: 1px solid #e5ddd8; border-radius: 6px; background: #f7f1ee; }
.apps .active::after { left: 21px; width: 24px; background: #0078d4; }
.tray { display: flex; align-items: center; justify-content: flex-end; padding: 0 33px 0 0; }
.tray svg { fill: none; stroke: #111; stroke-width: 1.500; }
.mi { margin-left: 26px; }
.mi2 { margin-left: 28px; }
.ime { font-size: 20px; margin-left: 26px; }
.wifi { margin-left: 27px; }
.snd { margin-left: 13px; }
.bat { margin-left: 15px; }
.tray time { font-size: 17px; text-align: right; margin: 0 15px 0 25px; }
.watermark { position: absolute; right: 3px; top: -2px; font: 48px/56px "Noto Sans CJK SC", sans-serif; font-weight: 300; color: rgba(255, 255, 255, .55); text-shadow: 1px 1px 1px rgba(90, 90, 90, .55); white-space: nowrap; }
```
